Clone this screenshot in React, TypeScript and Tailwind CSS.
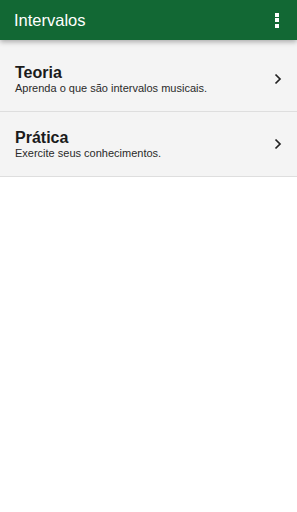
const items = [
  { title: "Teoria", subtitle: "Aprenda o que são intervalos musicais." },
  { title: "Prática", subtitle: "Exercite seus conhecimentos." },
];

const Chevron = () => (
  <svg width="10" height="12" viewBox="0 0 10 12" fill="none">
    <path d="M2.5 1.5 L7 6 L2.5 10.5" stroke="#222" strokeWidth="1.7" />
  </svg>
);

export default function App() {
  return (
    <div className="min-h-[512px] bg-white font-['Liberation_Sans',Arial,sans-serif]">
      <header className="relative z-10 flex h-10 items-center justify-between bg-[#126834] pl-[14px] pr-[18px] shadow-[0_2px_5px_rgba(0,0,0,0.3)]">
        <h1 className="text-[16.5px] text-white">Intervalos</h1>
        <div className="flex flex-col gap-[1.5px]">
          <span className="block h-1 w-1 bg-white" />
          <span className="block h-1 w-1 bg-white" />
          <span className="block h-1 w-1 bg-white" />
        </div>
      </header>
      <ul className="bg-[#f4f4f4] pt-[7px]">
        {items.map((item) => (
          <li
            key={item.title}
            className="flex h-[65px] items-center justify-between border-b border-[#dedede] bg-[#f4f4f4] pl-[15px] pr-[14px]"
          >
            <div className="flex flex-col">
              <span className="text-[16px] leading-[19px] font-bold text-[#1b1b1b]">{item.title}</span>
              <span className="text-[11px] leading-[13px] text-[#2a2a2a]">{item.subtitle}</span>
            </div>
            <Chevron />
          </li>
        ))}
      </ul>
    </div>
  );
}
